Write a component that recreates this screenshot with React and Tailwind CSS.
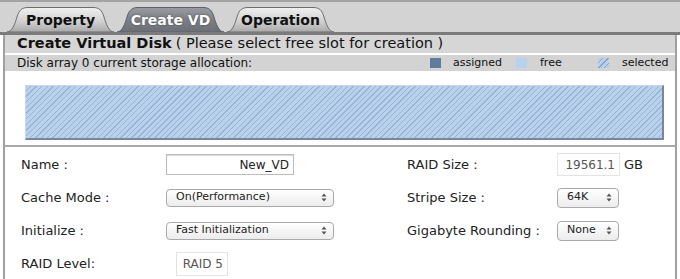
import React from 'react';

const font = { fontFamily: '"DejaVu Sans", Verdana, sans-serif' };

const Tab = ({ label, active }) => (
  <div className="relative w-[107px] h-[25px] flex items-center justify-center">
    <svg className="absolute inset-0" width="107" height="25" viewBox="0 0 107 25">
      <defs>
        <linearGradient id={active ? 'tabA' : 'tabI'} x1="0" y1="0" x2="0" y2="1">
          {active ? (
            <>
              <stop offset="0" stopColor="#9a9ca2" />
              <stop offset="0.5" stopColor="#7c7f86" />
              <stop offset="1" stopColor="#6c6f76" />
            </>
          ) : (
            <>
              <stop offset="0" stopColor="#f0f0f0" />
              <stop offset="0.55" stopColor="#d2d2d2" />
              <stop offset="1" stopColor="#a9a9a9" />
            </>
          )}
        </linearGradient>
      </defs>
      <path
        d="M0,25 C5,25 8,17 10,10 C12,3 15,0.5 21,0.5 L86,0.5 C92,0.5 95,3 97,10 C99,17 102,25 107,25 Z"
        fill={`url(#${active ? 'tabA' : 'tabI'})`}
        stroke={active ? '#5d6068' : '#6e6e6e'}
        strokeWidth="1"
      />
    </svg>
    <span
      className={`relative text-[14px] font-bold pt-[2px] ${active ? 'text-white [text-shadow:0_0_2px_#444]' : 'text-[#111]'}`}
    >
      {label}
    </span>
  </div>
);

const Arrows = () => (
  <svg width="6" height="9" viewBox="0 0 6 9" className="shrink-0">
    <path d="M3,0.5 L5.5,3.5 L0.5,3.5 Z" fill="#555" />
    <path d="M3,8.5 L5.5,5.5 L0.5,5.5 Z" fill="#555" />
  </svg>
);

const Select = ({ value, className }) => (
  <div
    className={`flex items-center justify-between rounded-[4px] border border-[#a9a9a9] bg-gradient-to-b from-white to-[#ececec] pl-[9px] pr-[6px] text-[11px] text-[#222] ${className}`}
  >
    <span>{value}</span>
    <Arrows />
  </div>
);

const Label = ({ children, className = '' }) => (
  <div className={`text-[13px] text-[#222] ${className}`}>{children}</div>
);

export default function App() {
  return (
    <div className="w-[680px] h-[279px] bg-white overflow-hidden flex flex-col" style={font}>
      {/* Tabs */}
      <div className="h-[32px] shrink-0 bg-[#d3d3d3] border-t-2 border-[#a3a3a3] flex items-end pl-[7px] gap-[3px]">
        <Tab label="Property" />
        <Tab label="Create VD" active />
        <Tab label="Operation" />
      </div>
      <div className="h-[3px] shrink-0 bg-[#7b7b7b]" />

      <div className="flex-1 ml-[3px] mr-[3px] border-l-2 border-r-2 border-[#a0a0a0] flex flex-col">
        {/* Title */}
        <div className="h-[18px] shrink-0 bg-[#d6d6d6] flex items-center pl-[12px] text-[14.5px] text-[#111]">
          <span className="font-bold">Create Virtual Disk</span>
          <span className="ml-[4px]">( Please select free slot for creation )</span>
        </div>
        <div className="h-[2px] shrink-0 bg-white" />
        {/* Allocation header */}
        <div className="h-[16px] shrink-0 bg-[#d3d3d3] flex items-center pl-[12px] text-[12px] text-[#111]">
          <span className="w-[413px]">Disk array 0 current storage allocation:</span>
          <span className="w-[11px] h-[10px] bg-[#5f7c9f]" />
          <span className="ml-[12px] w-[63px] text-[11px]">assigned</span>
          <span className="w-[11px] h-[10px] bg-[#b7d2ef]" />
          <span className="ml-[13px] w-[58px] text-[11px]">free</span>
          <span className="w-[11px] h-[10px] bg-[#b7d2ef] bg-[repeating-linear-gradient(135deg,#b7d2ef_0px,#b7d2ef_3px,#8aa3c4_3px,#8aa3c4_4px)]" />
          <span className="ml-[13px] text-[11px]">selected</span>
        </div>

        {/* Allocation bar */}
        <div className="h-[74px] shrink-0 bg-white pt-[14px] pl-[20px] pr-[11px]">
          <div className="h-[55px] bg-[#b5cfeb] bg-[repeating-linear-gradient(135deg,#b8d1ec_0px,#b8d1ec_3px,#9bb3d2_3px,#9bb3d2_4px)] border-t border-l border-[#c8d8ea] border-b-2 border-r-2 border-b-[#7886a2] border-r-[#7886a2]" />
        </div>
        <div className="h-[2px] shrink-0 bg-[#a9a9a9]" />

        {/* Form */}
        <div className="flex-1 pt-[1px] pl-[16px]">
          <div className="flex items-center h-[33px]">
            <Label className="w-[145px]">Name :</Label>
            <div className="w-[241px]">
              <div className="w-[128px] h-[21px] border border-[#bcbcbc] shadow-[inset_0_1px_1px_#d8d8d8] flex items-center justify-end pr-[4px] text-[12px] text-[#222]">
                New_VD
              </div>
            </div>
            <Label className="w-[150px]">RAID Size :</Label>
            <div className="w-[63px] h-[23px] border border-[#e3e3e3] flex items-center justify-end pr-[4px] text-[12px] text-[#555]">
              19561.1
            </div>
            <span className="ml-[4px] text-[13px] text-[#222]">GB</span>
          </div>

          <div className="flex items-center h-[33px]">
            <Label className="w-[145px]">Cache Mode :</Label>
            <div className="w-[241px]">
              <Select value="On(Performance)" className="w-[168px] h-[18px]" />
            </div>
            <Label className="w-[150px]">Stripe Size :</Label>
            <Select value="64K" className="w-[62px] h-[20px]" />
          </div>

          <div className="flex items-center h-[33px]">
            <Label className="w-[145px]">Initialize :</Label>
            <div className="w-[241px]">
              <Select value="Fast Initialization" className="w-[168px] h-[18px]" />
            </div>
            <Label className="w-[150px]">Gigabyte Rounding :</Label>
            <Select value="None" className="w-[62px] h-[20px]" />
          </div>

          <div className="flex items-center h-[33px]">
            <Label className="w-[155px]">RAID Level:</Label>
            <div className="w-[52px] h-[24px] border border-[#e3e3e3] flex items-center justify-end pr-[4px] text-[12px] text-[#555]">
              RAID 5
            </div>
          </div>
        </div>
      </div>
    </div>
  );
}
